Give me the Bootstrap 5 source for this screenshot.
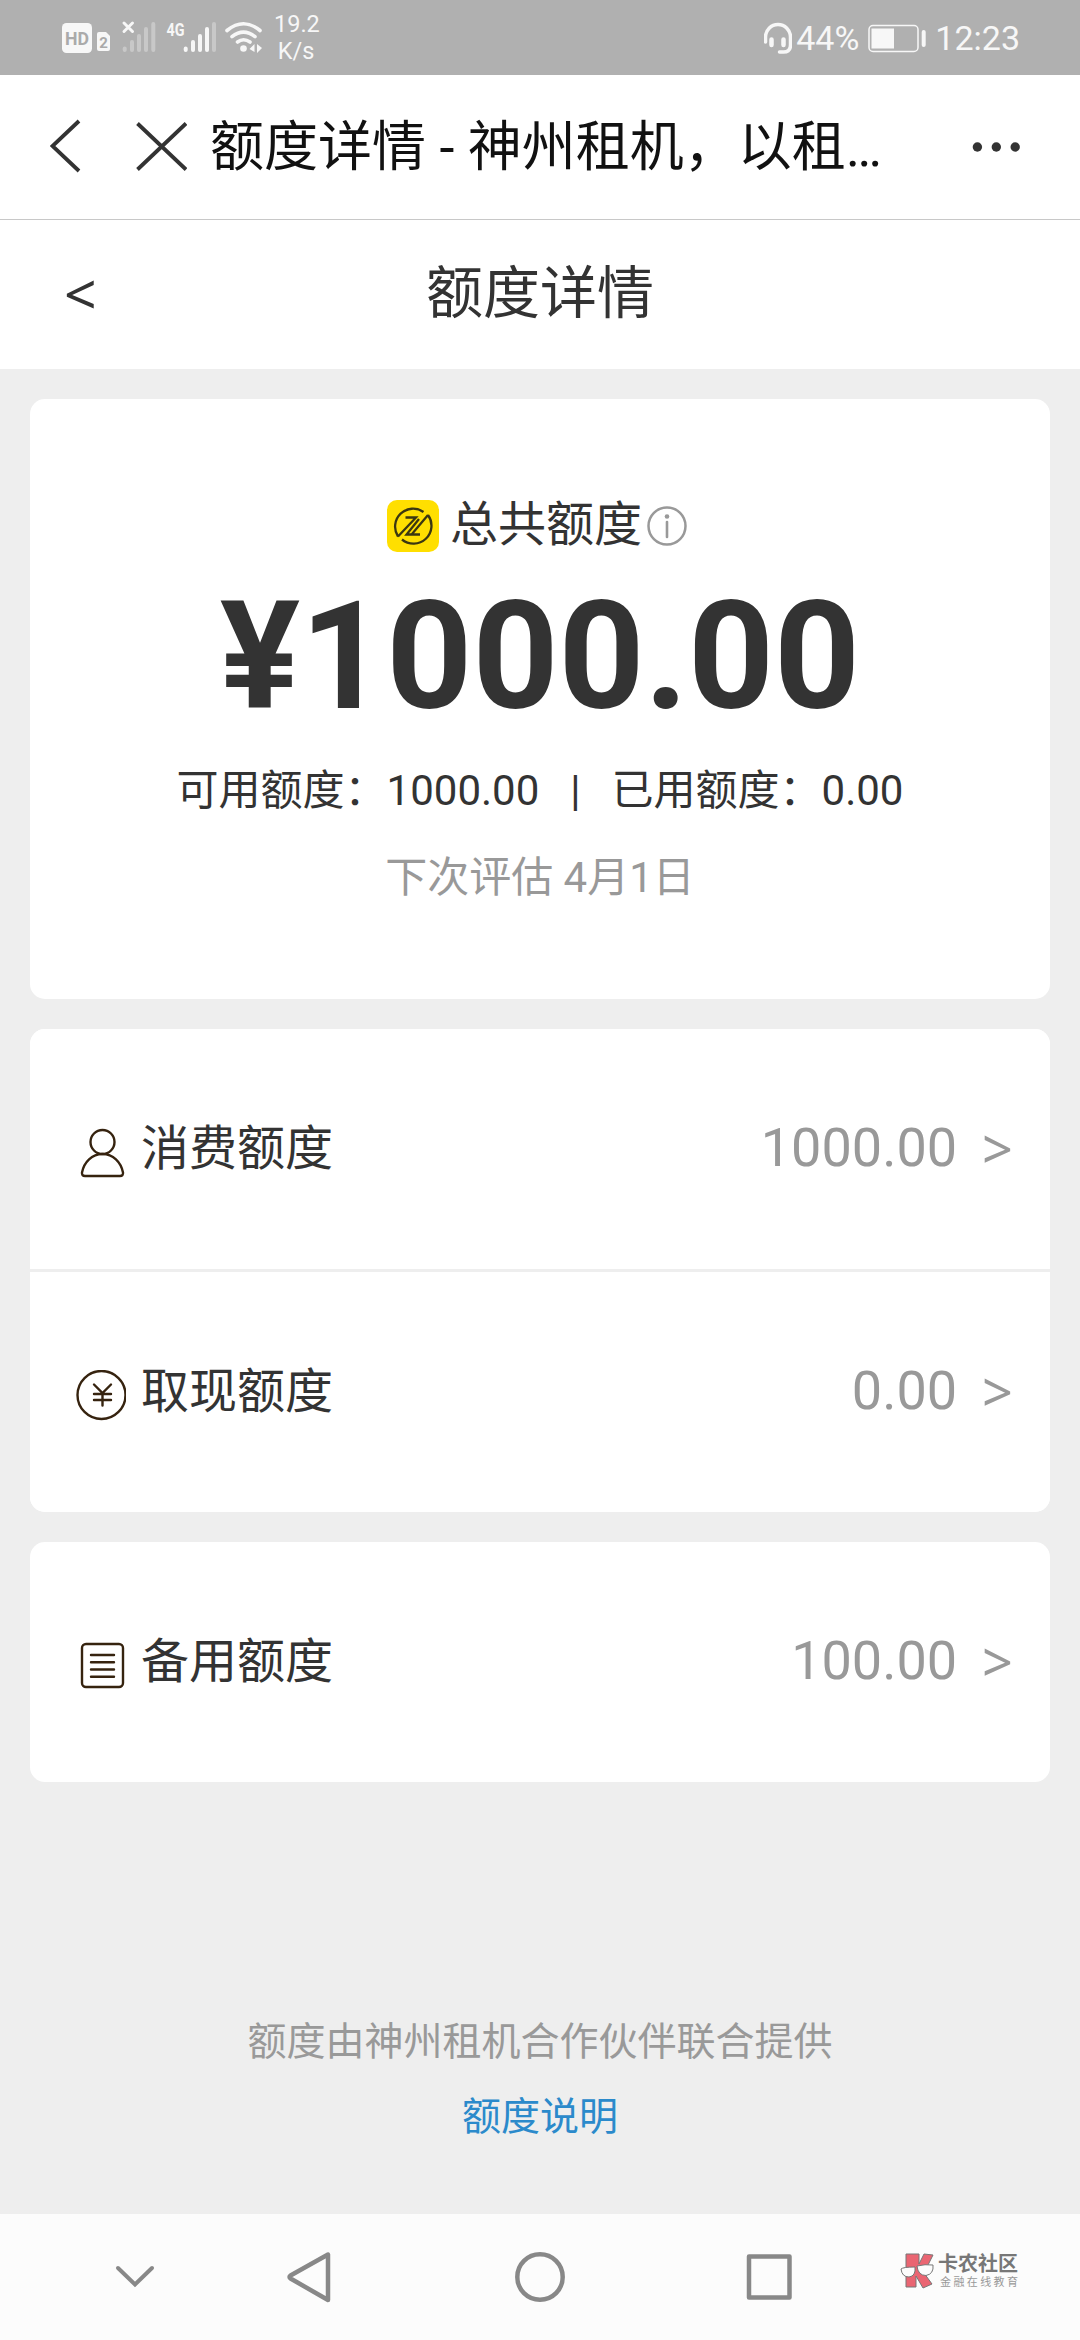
<!DOCTYPE html>
<html lang="zh-CN">
<head>
<meta charset="utf-8">
<meta name="viewport" content="width=device-width, initial-scale=1">
<title>额度详情</title>
<link rel="stylesheet" href="https://cdn.jsdelivr.net/npm/bootstrap@5.3.0/dist/css/bootstrap.min.css">
<style>
body{font-family:Roboto,"Noto Sans CJK SC",sans-serif;background:#eee;color:#333;height:2340px;overflow:hidden;white-space:nowrap}
svg{display:block;flex:none}
.status{height:75px;background:#b0b0b0;color:#f7f7f7;padding:0 62px 0 62px}
.status-num{font-size:34px;line-height:75px;padding-top:1px;margin-right:-2px}
.speed{font-size:23.5px;line-height:27px;width:44px;margin-left:11px;padding-top:1px}
.appbar{height:145px;border-bottom:1px solid #c8c8c8;padding:0 60px 0 50px}
.appbar-title{font-size:54px;line-height:142px;color:#111;margin-left:23px;padding-top:2px}
.titlebar{height:149px;padding-left:64px}
.titlebar a{width:61px;font-size:57px;line-height:147px}
.titlebar h1{font-size:57px;line-height:147px;font-weight:400;padding-right:125px}
.angle{font-family:"Noto Sans",sans-serif;color:inherit}
.stack{padding:30px 30px 0;gap:30px}
.panel{border:0;border-radius:15px;color:#333}
.total-card{height:600px;padding-top:94px}
.total-label{font-size:48px;line-height:64px;gap:11px;padding-right:5px}
.brand-mark{margin-top:2px}
.amount{font-size:150px;line-height:150px;margin-top:25px}
.split{font-size:42px;line-height:60px;margin-top:29px}
.split i{font-style:normal;margin:0 31px}
.next-eval{font-size:42px;line-height:60px;margin-top:27px;color:#999}
.limit-row{height:240px;border:0;padding:0 37px 0 46px;font-size:48px;color:#333;background:#fff}
.limit-row+.limit-row{border-top:3px solid #eee;height:243px}
.limit-row .ico{margin:7px 15px 0 0}
.val{font-size:54px;line-height:80px;color:#999;gap:25px;padding-bottom:3px}
.provider{font-size:39px;line-height:75px;color:#999;padding-top:193px}
.provider a{color:#2b8acb}
.sysnav{height:126px;background:#fcfcfc}
.wm-text{padding:40px 0 0 2px}
.wm-a{font-size:20px;line-height:21px;font-weight:700;color:#777}
.wm-b{font-size:11px;line-height:15px;letter-spacing:2.4px;color:#999;padding-left:2px}
</style>
<script src="https://cdn.jsdelivr.net/npm/bootstrap@5.3.0/dist/js/bootstrap.bundle.min.js"></script>
</head>
<body class="d-flex flex-column">
<div class="status d-flex align-items-center flex-shrink-0">
  <svg width="201" height="75" viewBox="62 0 201 75">
    <rect x="62" y="23" width="30" height="30" rx="4.500" fill="#f7f7f7"/>
    <text x="77" y="45" text-anchor="middle" font-size="19" font-weight="700" textLength="24" lengthAdjust="spacingAndGlyphs" fill="#aaa">HD</text>
    <path d="M99 32h7l4 4v13a2 2 0 0 1-2 2h-9a2 2 0 0 1-2-2V34a2 2 0 0 1 2-2z" fill="#f7f7f7"/>
    <text x="103.500" y="48" text-anchor="middle" font-size="15" font-weight="700" fill="#aaa">2</text>
    <path d="M124 23l8.500 8.500M132.500 23l-8.500 8.500" stroke="#f7f7f7" stroke-width="3" stroke-linecap="round"/>
    <g stroke="#c8c8c8" stroke-width="4" stroke-linecap="round">
      <path d="M124.700 48.500v1.500M132 42v8M139 36v14M146 29v21M153.300 24v26M214 24v26"/>
      <path stroke="#f7f7f7" d="M185.700 48.500v1.500M193 42v8M200 36v14M207 29v21"/>
    </g>
    <text x="166.500" y="35.500" font-size="19" font-weight="700" textLength="18" lengthAdjust="spacingAndGlyphs" fill="#f7f7f7">4G</text>
    <g fill="none" stroke="#f7f7f7" stroke-width="3.600" stroke-linecap="round"><path d="M227 30.500Q243.500 17 260 30.500M232 36.700Q243.500 27.500 255 36.700M237.500 42Q243.500 37.500 250 42"/></g>
    <circle cx="243.500" cy="48.500" r="3.300" fill="#f7f7f7"/>
    <path d="M249.500 49l5-5v8zM257 44l5 4-5 5z" fill="#f7f7f7"/>
  </svg>
  <div class="speed text-center">19.2<br>K/s</div>
  <div class="d-flex align-items-center ms-auto status-num">
    <svg width="28" height="75" viewBox="762 0 28 75" fill="none" stroke="#f7f7f7" stroke-linecap="round"><path stroke-width="3.500" d="M763.500 41v-5a12.500 12.500 0 0 1 25 0v8q0 7-7 7h-4"/><path stroke-width="4.500" d="M769.500 38.500v5.500M781.500 38.500v5.500"/></svg>
    <span class="ms-1">44%</span>
    <svg width="60" height="75" viewBox="866 0 60 75" class="ms-2"><rect x="868" y="24.500" width="49" height="26" rx="4" fill="none" stroke="#f7f7f7" stroke-width="1.500"/><rect x="870.500" y="27.500" width="22.500" height="20" fill="#f7f7f7"/><rect x="920.700" y="29" width="4" height="17" rx="2" fill="#f7f7f7"/></svg>
    <span class="ms-2">12:23</span>
  </div>
</div>

<header class="appbar bg-white d-flex align-items-center flex-shrink-0">
  <svg width="137" height="144" viewBox="50 75 137 144" fill="none" stroke="#333" stroke-width="3.800"><path d="M79 121L52.500 146L79 171M137.500 123.500l48.500 46M186 123.500l-48.500 46"/></svg>
  <div class="appbar-title">额度详情 - 神州租机，以租…</div>
  <svg class="ms-auto" width="48" height="144" viewBox="971 75 48 144" fill="#333"><circle cx="976.400" cy="147" r="4.700"/><circle cx="995.300" cy="147" r="4.700"/><circle cx="1014.200" cy="147" r="4.700"/></svg>
</header>

<div class="titlebar bg-white d-flex flex-shrink-0">
  <a class="angle text-decoration-none" href="#">&lt;</a>
  <h1 class="flex-grow-1 text-center m-0">额度详情</h1>
</div>

<main class="stack d-flex flex-column flex-grow-1">
  <section class="card panel total-card text-center">
    <div class="total-label d-flex justify-content-center align-items-center">
      <svg class="brand-mark" width="52" height="52" viewBox="0 0 52 52"><rect width="52" height="52" rx="10" fill="#ffdf00"/><g fill="none" stroke="#3b3711" stroke-width="2.300"><path d="M11 36.500A18 18 0 0 1 36.500 12M41 15A18 18 0 0 1 15 39.500M11 36.500L29 17.500H18.500M41 15L24.500 34.500H33M32 19L19.500 34.500H25"/></g></svg>
      <div class="d-flex align-items-center"><span>总共额度</span>
      <svg class="ms-1" width="42" height="42" viewBox="0 0 42 42"><circle cx="21" cy="22" r="18.500" fill="none" stroke="#999" stroke-width="2.500"/><circle cx="21" cy="12.500" r="2.300" fill="#999"/><path d="M21 18v15" stroke="#999" stroke-width="2.600" stroke-linecap="round"/></svg></div>
    </div>
    <div class="amount fw-bold">¥1000.00</div>
    <div class="split">可用额度：1000.00<i>|</i>已用额度：0.00</div>
    <div class="next-eval">下次评估 4月1日</div>
  </section>

  <section class="card panel list-group overflow-hidden">
    <a class="limit-row d-flex align-items-center text-decoration-none" href="#">
      <svg class="ico" width="50" height="52" viewBox="0 0 50 52" fill="none" stroke="#36230f" stroke-width="2.400"><circle cx="26.500" cy="15" r="12"/><path d="M26.500 27C16 27 8 35 6 45.500Q5.600 49 9 49H44Q47.400 49 47 45.500C45 35 37 27 26.500 27z"/></svg>
      <span>消费额度</span><span class="val ms-auto d-flex"><span>1000.00</span><span class="angle">&gt;</span></span>
    </a>
    <a class="limit-row d-flex align-items-center text-decoration-none" href="#">
      <svg class="ico" width="50" height="52" viewBox="0 0 50 52" fill="none" stroke="#36230f" stroke-width="2.400"><circle cx="25.500" cy="25" r="24"/><path stroke-linecap="round" d="M18 14.500l8.500 8.500 8.500-8.500M18 24h17M18 30h17M26.500 23v12.500"/></svg>
      <span>取现额度</span><span class="val ms-auto d-flex"><span>0.00</span><span class="angle">&gt;</span></span>
    </a>
  </section>

  <section class="card panel list-group overflow-hidden">
    <a class="limit-row d-flex align-items-center text-decoration-none" href="#">
      <svg class="ico" width="50" height="52" viewBox="0 0 50 52" fill="none" stroke="#36230f" stroke-width="2.400"><rect x="6" y="4" width="41" height="43" rx="4"/><path stroke-linecap="round" d="M15 15h23M15 22.300h23M15 29.500h23M15 36.700h23"/></svg>
      <span>备用额度</span><span class="val ms-auto d-flex"><span>100.00</span><span class="angle">&gt;</span></span>
    </a>
  </section>
  <footer class="provider text-center">
    <div>额度由神州租机合作伙伴联合提供</div>
    <a class="d-block text-decoration-none" href="#">额度说明</a>
  </footer>
</main>

<nav class="sysnav d-flex flex-shrink-0">
  <svg width="880" height="126" viewBox="0 2214 880 126" fill="none" stroke="#888" stroke-width="4.500" stroke-linecap="round" stroke-linejoin="round"><path stroke-width="4" stroke-linejoin="miter" d="M118 2268l17 16.500 17-16.500"/><path d="M328 2254.500v45.500L290.500 2278.500q-2-1.500 0-3z"/><circle cx="540" cy="2277" r="22.700"/><rect x="749" y="2256.500" width="40.500" height="41"/></svg>
  <div class="d-flex align-items-start">
    <svg class="ms-3" width="40" height="126" viewBox="896 2214 40 126" stroke="#777" stroke-width="1"><path fill="#ea6572" d="M906 2254h13v10l5-10 9 1-7 14-2 4 8 11-9 4-7-12v11h-10z"/><path fill="#fcfcfc" d="M901 2269q2-2 14-2 1 9-6 10-7 0-8-8zM917 2266q8-2 16-1 1 9-7 10.500-8 0-9-9.500z"/></svg>
    <div class="wm-text"><div class="wm-a">卡农社区</div><div class="wm-b">金融在线教育</div></div>
  </div>
</nav>
</body>
</html>
